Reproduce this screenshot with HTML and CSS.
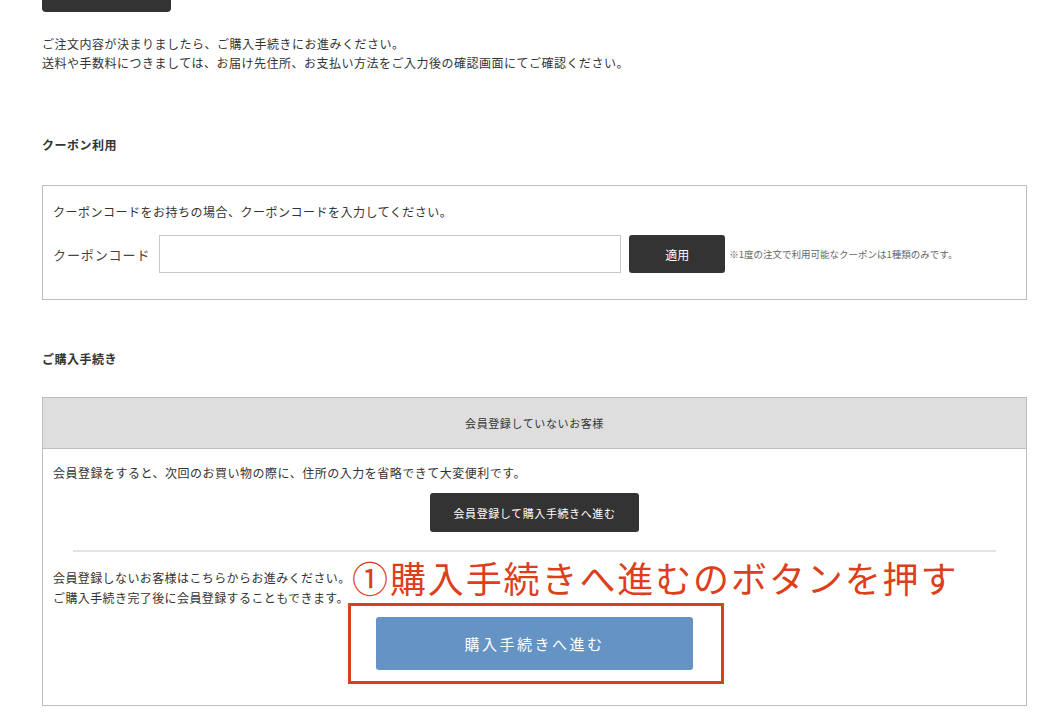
FILE: index.html
```html
<!DOCTYPE html>
<html lang="ja">
<head>
    <meta charset="UTF-8">
    <meta name="viewport" content="width=device-width, initial-scale=1.0">
    <title>ご購入手続き</title>
    <link rel="stylesheet" href="styles.css">
</head>
<body>
    <div class="page">
        <div class="top-btn"></div>
        <div class="intro">
            <p>ご注文内容が決まりましたら、ご購入手続きにお進みください。</p>
            <p>送料や手数料につきましては、お届け先住所、お支払い方法をご入力後の確認画面にてご確認ください。</p>
        </div>

        <h2 class="section-title coupon-title">クーポン利用</h2>
        <div class="box coupon-box">
            <p>クーポンコードをお持ちの場合、クーポンコードを入力してください。</p>
            <div class="coupon-row">
                <label class="coupon-label" for="coupon">クーポンコード</label>
                <input class="coupon-input" id="coupon" type="text">
                <button class="dark-btn apply-btn">適用</button>
                <span class="coupon-note">※1度の注文で利用可能なクーポンは1種類のみです。</span>
            </div>
        </div>

        <h2 class="section-title purchase-title">ご購入手続き</h2>
        <div class="box purchase-box">
            <div class="box-head">会員登録していないお客様</div>
            <div class="box-body">
                <p>会員登録をすると、次回のお買い物の際に、住所の入力を省略できて大変便利です。</p>
                <button class="dark-btn register-btn">会員登録して購入手続きへ進む</button>
                <hr class="divider">
                <div class="guest-text">
                    <p>会員登録しないお客様はこちらからお進みください。</p>
                    <p>ご購入手続き完了後に会員登録することもできます。</p>
                </div>
                <button class="proceed-btn">購入手続きへ進む</button>
            </div>
            <div class="note-text">①購入手続きへ進むのボタンを押す</div>
            <div class="note-frame"></div>
        </div>
    </div>
</body>
</html>
```

FILE: styles.css
```css
body {
    margin: 0;
    padding: 0;
    background: #fff;
    color: #333;
    font-family: "Noto Sans CJK JP", "Noto Sans", sans-serif;
    font-size: 12px;
    letter-spacing: 0.5px;
}
p {
    margin: 0;
    line-height: 19px;
}
.page {
    width: 985px;
    margin-left: 42px;
}
.top-btn {
    width: 129px;
    height: 12px;
    background: #333;
    border-radius: 0 0 4px 4px;
}
.intro {
    margin-top: 22px;
}
.section-title {
    margin: 63px 0 31px;
    font-size: 12px;
    font-weight: bold;
    line-height: 19px;
}
.purchase-title {
    margin: 49px 0 29px;
}
.box {
    border: 1px solid #bdbdbd;
}
.coupon-box {
    padding: 16px 10px 26px;
}
.coupon-row {
    display: flex;
    align-items: center;
    margin-top: 14px;
}
.coupon-label {
    font-size: 13px;
    letter-spacing: 0.9px;
    color: #444;
    margin-right: 9px;
}
.coupon-input {
    width: 462px;
    height: 38px;
    box-sizing: border-box;
    border: 1px solid #c8c8c8;
    margin: 0;
}
.dark-btn {
    background: #333;
    color: #fff;
    border: none;
    border-radius: 3px;
    font-family: inherit;
    cursor: pointer;
}
.apply-btn {
    width: 96px;
    height: 38px;
    margin-left: 8px;
    font-size: 12px;
}
.coupon-note {
    margin-left: 4px;
    font-size: 9.5px;
    letter-spacing: 0;
    color: #666;
}
.purchase-box {
    position: relative;
}
.box-head {
    height: 50px;
    line-height: 50px;
    background: #dedede;
    border-bottom: 1px solid #bdbdbd;
    text-align: center;
    font-size: 11px;
    letter-spacing: 0.6px;
}
.box-body {
    padding: 14px 10px 35px;
    display: flex;
    flex-direction: column;
    align-items: flex-start;
}
.register-btn {
    align-self: center;
    width: 209px;
    height: 39px;
    margin-top: 11px;
    font-size: 11px;
    letter-spacing: 0.6px;
}
.divider {
    align-self: stretch;
    margin: 18px 20px 0;
    border: none;
    height: 2px;
    background: #e3e3e3;
}
.guest-text {
    margin-top: 16px;
}
.guest-text p {
    line-height: 20px;
    letter-spacing: 0.4px;
}
.proceed-btn {
    align-self: center;
    width: 317px;
    height: 53px;
    margin-top: 9px;
    background: #6493c4;
    color: #fff;
    border: none;
    border-radius: 3px;
    font-family: inherit;
    font-size: 15px;
    letter-spacing: 2.5px;
}
.note-text {
    position: absolute;
    left: 309px;
    top: 158px;
    line-height: 42px;
    font-size: 36px;
    letter-spacing: 1.9px;
    color: #dc3f1c;
    white-space: nowrap;
}
.note-frame {
    position: absolute;
    left: 305px;
    top: 205px;
    width: 370px;
    height: 75px;
    border: 3px solid #dc3f1c;
}
```
